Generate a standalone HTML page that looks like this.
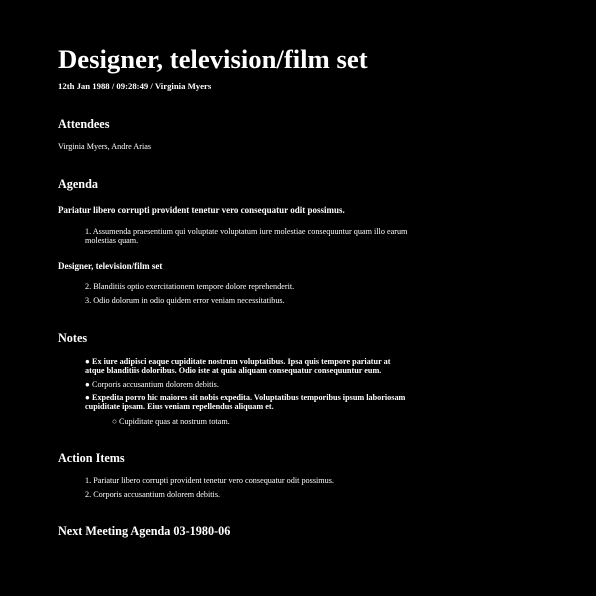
<!DOCTYPE html>
<html><head><meta charset="utf-8"><style>
body{margin:0;background:#000;width:596px;height:596px;overflow:hidden;color:#fff;font-family:"Liberation Serif",serif;}
div{position:absolute;white-space:nowrap;line-height:1;}
.h2{font-size:12.2px;font-weight:bold;left:58px;}
.t{font-size:8.2px;}
.b{font-weight:bold;}
.p{font-size:9px;font-weight:bold;left:58px;}
</style></head><body>
<div style="left:58px;top:46px;font-size:26.7px;font-weight:bold">Designer, television/film set</div>
<div class="b" style="left:58px;top:82px;font-size:8.7px">12th Jan 1988 / 09:28:49 / Virginia Myers</div>
<div class="h2" style="top:118px">Attendees</div>
<div class="t" style="left:58px;top:143px">Virginia Myers, Andre Arias</div>
<div class="h2" style="top:178px">Agenda</div>
<div class="p" style="top:206px">Pariatur libero corrupti provident tenetur vero consequatur odit possimus.</div>
<div class="t" style="left:85px;top:228px">1. Assumenda praesentium qui voluptate voluptatum iure molestiae consequuntur quam illo earum</div>
<div class="t" style="left:85px;top:237px">molestias quam.</div>
<div class="p" style="top:262px">Designer, television/film set</div>
<div class="t" style="left:85px;top:283px">2. Blanditiis optio exercitationem tempore dolore reprehenderit.</div>
<div class="t" style="left:85px;top:297px">3. Odio dolorum in odio quidem error veniam necessitatibus.</div>
<div class="h2" style="top:332px">Notes</div>
<div class="t b" style="left:85px;top:358px">● Ex iure adipisci eaque cupiditate nostrum voluptatibus. Ipsa quis tempore pariatur at</div>
<div class="t b" style="left:85px;top:367px">atque blanditiis doloribus. Odio iste at quia aliquam consequatur consequuntur eum.</div>
<div class="t" style="left:85px;top:381px">● Corporis accusantium dolorem debitis.</div>
<div class="t b" style="left:85px;top:394px">● Expedita porro hic maiores sit nobis expedita. Voluptatibus temporibus ipsum laboriosam</div>
<div class="t b" style="left:85px;top:403px">cupiditate ipsam. Eius veniam repellendus aliquam et.</div>
<div class="t" style="left:112px;top:418px">○ Cupiditate quas at nostrum totam.</div>
<div class="h2" style="top:452px">Action Items</div>
<div class="t" style="left:85px;top:477px">1. Pariatur libero corrupti provident tenetur vero consequatur odit possimus.</div>
<div class="t" style="left:85px;top:491px">2. Corporis accusantium dolorem debitis.</div>
<div class="h2" style="top:525px">Next Meeting Agenda 03-1980-06</div>
</body></html>
